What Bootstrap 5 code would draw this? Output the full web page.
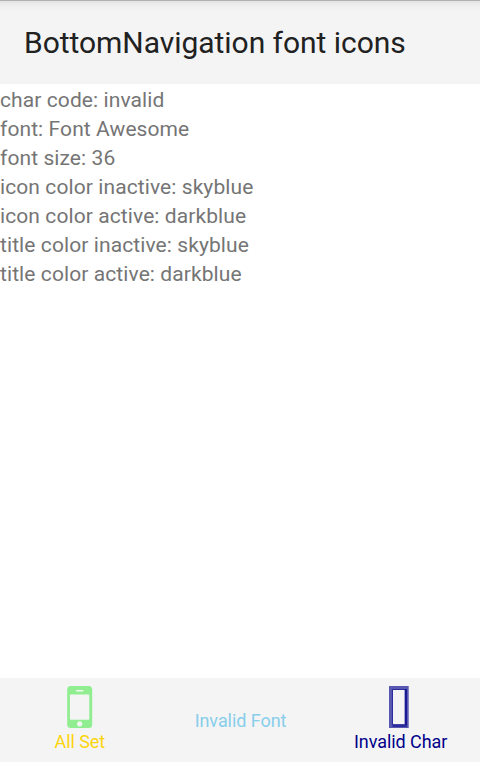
<!DOCTYPE html>
<html lang="en">
<head>
<meta charset="utf-8">
<meta name="viewport" content="width=device-width, initial-scale=1">
<title>BottomNavigation font icons</title>
<link rel="stylesheet" href="https://cdn.jsdelivr.net/npm/bootstrap@5.3.0/dist/css/bootstrap.min.css">
<style>
body{font-family:Roboto,sans-serif;color:#757575;background:#fff}
.app-bar{height:84px;background:linear-gradient(#acacac 0,#b4b4b4 1px,#e2e2e2 1px,#eeeeee 5px,#f4f4f4 12px);padding:2px 24px 0}
.app-title{font-size:30px;line-height:36px;letter-spacing:-.04px;color:#212121}
.info-line{font-size:21px;line-height:29px;height:29px;padding-top:2px;letter-spacing:.09px;white-space:nowrap}
.tab-bar{height:84px;background:#f4f4f4}
.tab-item{color:inherit;width:0}
.tab-title{font-size:18px;line-height:22px;letter-spacing:-.06px;white-space:nowrap}
.tab-all{color:#fcd40c}
.tab-font{color:#87ceeb;padding:2px 0 0 1px}
.tab-char{color:#00008b}
.tab-icon{margin:-1px 0 3px}
.tab-char .tab-icon{margin-right:2px}
.tab-char .tab-title{padding-left:1px}
</style>
</head>
<body class="vh-100 d-flex flex-column overflow-hidden">
<header class="app-bar d-flex align-items-center flex-shrink-0"><h1 class="app-title fw-normal m-0 text-nowrap">BottomNavigation font icons</h1></header>
<main class="flex-grow-1">
<div class="info-line">char code: invalid</div>
<div class="info-line">font: Font Awesome</div>
<div class="info-line">font size: 36</div>
<div class="info-line">icon color inactive: skyblue</div>
<div class="info-line">icon color active: darkblue</div>
<div class="info-line">title color inactive: skyblue</div>
<div class="info-line">title color active: darkblue</div>
</main>
<nav class="tab-bar d-flex flex-shrink-0">
<a class="tab-item flex-fill d-flex flex-column align-items-center justify-content-center text-decoration-none tab-all">
<svg class="tab-icon" width="26" height="42" viewBox="0.300 0 26 42"><path fill="#90ee90" fill-rule="evenodd" d="M4 0h18a3.500 3.500 0 0 1 3.500 3.500v35A3.500 3.500 0 0 1 22 42H4a3.500 3.500 0 0 1-3.500-3.500v-35A3.500 3.500 0 0 1 4 0ZM4 8.500Q3.200 8.500 3.200 9.300V33q0 .8.8.8h17.800q.8 0 .8-.8V9.300q0-.8-.8-.8ZM10 4a.8.8 0 0 0 0 1.600h6A.8.8 0 0 0 16 4ZM13 35.200a2.600 2.600 0 1 0 0 5.200 2.600 2.600 0 0 0 0-5.200Z"/></svg>
<span class="tab-title">All Set</span>
</a>
<a class="tab-item flex-fill d-flex flex-column align-items-center justify-content-center text-decoration-none tab-font">
<span class="tab-title">Invalid Font</span>
</a>
<a class="tab-item flex-fill d-flex flex-column align-items-center justify-content-center text-decoration-none tab-char">
<svg class="tab-icon" width="22" height="42" viewBox="0 0 22 42"><g fill="#00008b"><path opacity=".64" fill-rule="evenodd" d="M1 0h19.700v42H1ZM5 4v34h11.500V4Z"/><path opacity=".5" d="M4 3h1v36H4ZM5 3h12v1H5ZM4.500 38.500H19V41H4.500Z"/><path opacity=".7" d="M17 3h2v36h-2Z"/></g></svg>
<span class="tab-title">Invalid Char</span>
</a>
</nav>
<script src="https://cdn.jsdelivr.net/npm/bootstrap@5.3.0/dist/js/bootstrap.bundle.min.js"></script>
</body>
</html>
